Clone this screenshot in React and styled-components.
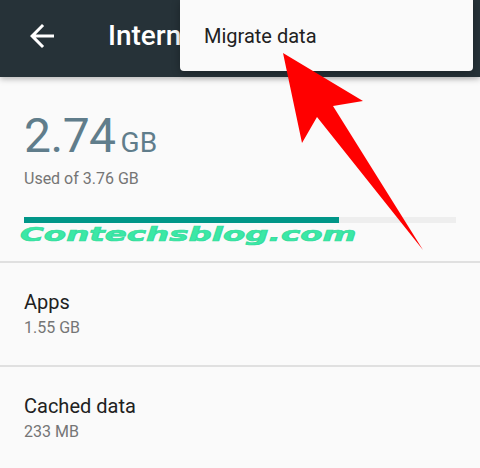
import React from 'react';
import styled, { createGlobalStyle } from 'styled-components';

const GlobalStyle = createGlobalStyle`
  html, body {
    margin: 0;
    padding: 0;
    background: #fafafa;
    font-family: Roboto, "Liberation Sans", sans-serif;
  }
`;

const Screen = styled.div`
  position: relative;
  width: 480px;
  height: 468px;
  overflow: hidden;
  background: #fafafa;
`;

const Toolbar = styled.header`
  position: relative;
  z-index: 2;
  height: 77px;
  background: #263238;
  display: flex;
  align-items: center;
  box-shadow: 0 2px 6px rgba(0, 0, 0, 0.28);
`;

const BackButton = styled.div`
  width: 36px;
  height: 36px;
  margin-left: 24px;
  margin-top: -6px;
  display: flex;
`;

// the overflow menu covers the rest of the title
const Title = styled.h1`
  margin: -7px 0 0 48px;
  width: 72px;
  overflow: hidden;
  font-size: 28px;
  font-weight: 500;
  color: #ffffff;
  white-space: nowrap;
`;

const Menu = styled.div`
  position: absolute;
  z-index: 3;
  top: 0;
  left: 180px;
  width: 293px;
  height: 71px;
  background: #fafafa;
  border-radius: 0 0 4px 4px;
  box-shadow: 0 2px 8px rgba(0, 0, 0, 0.3);
  display: flex;
  align-items: center;
`;

const MenuItem = styled.div`
  padding-left: 24px;
  font-size: 20px;
  color: #212121;
`;

const Summary = styled.section`
  padding: 35px 24px 0;
  height: 149px;
  border-bottom: 2px solid #e0e0e0;
`;

const BigLine = styled.div`
  display: flex;
  align-items: baseline;
  gap: 5px;
  color: #607d8b;
  line-height: 48px;
`;

const BigValue = styled.span`
  font-size: 48px;
  letter-spacing: -0.5px;
`;

const BigUnit = styled.span`
  font-size: 28px;
`;

const UsedOf = styled.div`
  margin-top: 2px;
  font-size: 16px;
  color: #757575;
  line-height: 20px;
`;

const Track = styled.div`
  margin-top: 28px;
  width: 432px;
  height: 6px;
  background: #eeeeee;
`;

const Fill = styled.div`
  height: 100%;
  background: #009688;
`;

const Watermark = styled.div`
  margin: 2px 0 0 -4px;
  font-family: "DejaVu Sans", sans-serif;
  font-weight: bold;
  font-style: italic;
  font-size: 19px;
  line-height: 18px;
  color: #3be8a6;
  -webkit-text-stroke: 0.7px #34dc9c;
  white-space: nowrap;
  transform: scaleX(1.71);
  transform-origin: left center;
`;

const Row = styled.div`
  height: 102px;
  padding: 0 24px;
  border-bottom: 2px solid #e0e0e0;
  display: flex;
  flex-direction: column;
  justify-content: center;
`;

const RowTitle = styled.div`
  font-size: 20px;
  line-height: 24px;
  color: #212121;
`;

const RowValue = styled.div`
  margin-top: 4px;
  font-size: 16px;
  line-height: 20px;
  color: #757575;
`;

const Pointer = styled.svg`
  position: absolute;
  z-index: 4;
  top: 0;
  left: 0;
  pointer-events: none;
`;

const rows = [
  { title: 'Apps', value: '1.55 GB' },
  { title: 'Cached data', value: '233 MB' },
];

export default function App() {
  const used = 2.74;
  const total = 3.76;
  const pct = (used / total) * 100;

  return (
    <Screen>
      <GlobalStyle />
      <Toolbar>
        <BackButton>
          <svg width="36" height="36" viewBox="0 0 24 24">
            <path fill="#ffffff" d="M20 11H7.83l5.59-5.59L12 4l-8 8 8 8 1.41-1.41L7.83 13H20v-2z" />
          </svg>
        </BackButton>
        <Title>Internal storage</Title>
      </Toolbar>
      <Menu>
        <MenuItem>Migrate data</MenuItem>
      </Menu>

      <Summary>
        <BigLine>
          <BigValue>{used}</BigValue>
          <BigUnit>GB</BigUnit>
        </BigLine>
        <UsedOf>Used of {total} GB</UsedOf>
        <Track>
          <Fill style={{ width: `${pct}%` }} />
        </Track>
        <Watermark>Contechsblog.com</Watermark>
      </Summary>

      {rows.map(r => (
        <Row key={r.title}>
          <RowTitle>{r.title}</RowTitle>
          <RowValue>{r.value}</RowValue>
        </Row>
      ))}

      <Pointer width="480" height="468" viewBox="0 0 480 468">
        <polygon
          fill="#ff0000"
          points="283,53 363,101 333,106 423,250 317,117 302,143"
        />
      </Pointer>
    </Screen>
  );
}
